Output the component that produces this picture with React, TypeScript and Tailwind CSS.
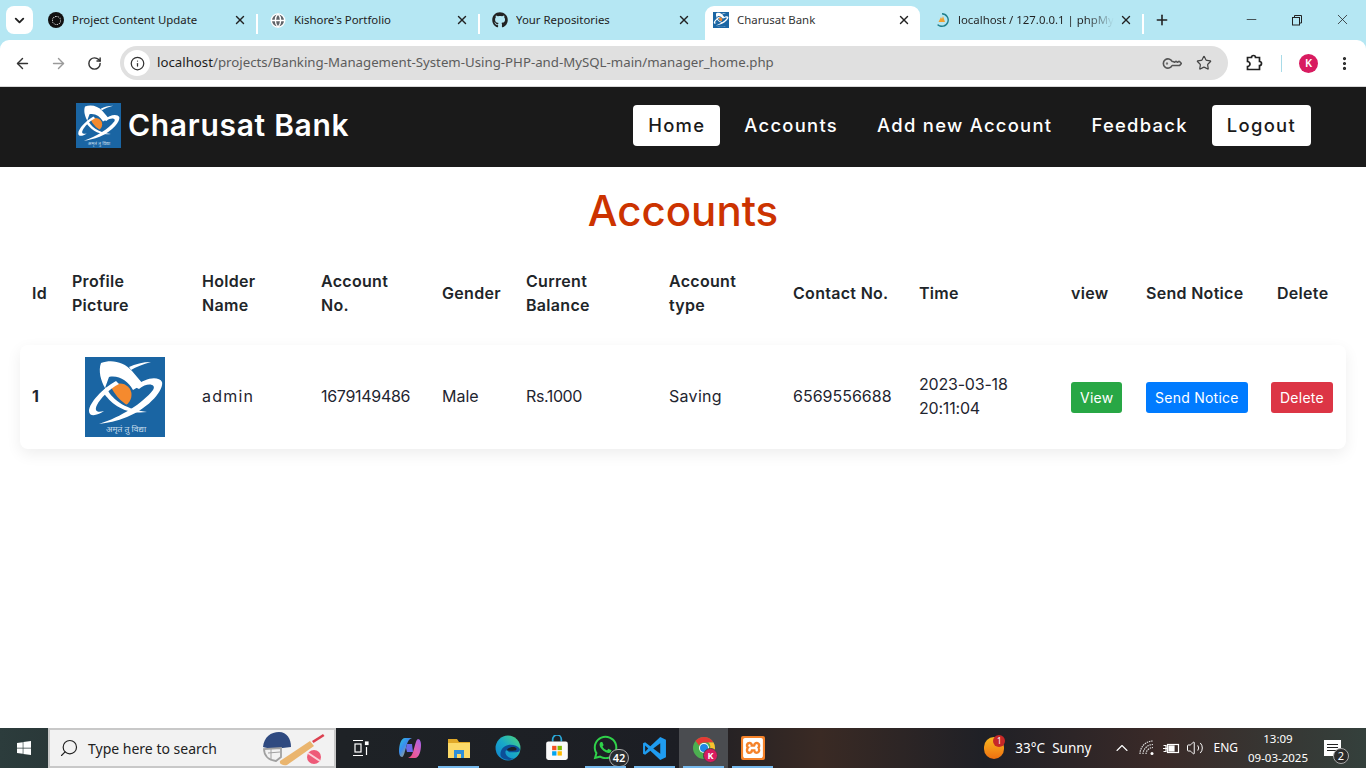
import { ArrowLeft, ArrowRight, ChevronDown, ChevronUp, Globe, Info, KeyRound, Minus, MoreVertical, Plus, RotateCw, Search, Star, Volume2, X } from 'lucide-react';
import { FaGithub, FaWhatsapp, FaWindows } from 'react-icons/fa';
import { SiXampp } from 'react-icons/si';

const poppins = { fontFamily: 'Inter, "Liberation Sans", sans-serif' };

function BankLogo({ className }: { className: string }) {
  return (
    <svg viewBox="0 0 80 80" className={className}>
      <rect width="80" height="80" fill="#1a65a3" />
      <circle cx="35" cy="38" r="11.500" fill="#f58a2e" />
      <path d="M20 27C25 41 36 53 54 58" fill="none" stroke="#1a65a3" strokeWidth="9" />
      <path d="M16 6C27 2 39 5 47 14L58 27 48 33C43 24 34 18 24 20L20 31C16 24 13 14 16 6Z" fill="#fff" />
      <path d="M21 30C26 41 38 52 62 55 40 58 26 47 18 35Z" fill="#fff" />
      <path d="M31 24C18 31 4 46 4 54 4 60 12 59 19 54 12 56 9 54 12 48 15 42 24 32 34 27Z" fill="#fff" />
      <path d="M44 10C50 7 58 5 66 5 58 7 51 10 46 13Z" fill="#fff" />
      <path d="M50 30C60 20 74 19 77 25 79 32 66 50 42 60 32 64 22 66 14 67 36 60 58 46 68 33 72 27 62 25 54 32Z" fill="#fff" />
      <text x="41" y="75" textAnchor="middle" fontSize="8.500" fill="#c7dcec" fontFamily="'Noto Sans', sans-serif">अमृतं तु विद्या</text>
    </svg>
  );
}

function ChromeTab({ icon, title, active, fade, divider }: { icon: React.ReactNode; title: string; active?: boolean; fade?: boolean; divider?: boolean }) {
  return (
    <div className={active ? 'relative mr-[2px] ml-[3px] flex h-[34px] w-[215px] items-center rounded-t-[9px] bg-white pr-[9px] pb-[6px] pl-[8px]' : 'relative flex h-[34px] w-[222px] items-center pr-[11px] pb-[6px] pl-[12px]'}>
      <span className="flex h-4 w-4 shrink-0 items-center justify-center">{icon}</span>
      <span className={`ml-2 flex-1 overflow-hidden whitespace-nowrap text-[11.400px] ${active ? 'text-[#333]' : 'text-[#222]'}`}>
        {fade ? <span className="bg-gradient-to-r from-[#222] from-[82%] to-transparent bg-clip-text text-transparent">{title}</span> : title}
      </span>
      <X size={14} strokeWidth={2.400} className="shrink-0 text-[#222]" />
      {divider && <span className="absolute top-[8px] right-0 h-[20px] w-[2px] bg-white" />}
    </div>
  );
}

function PmaIcon() {
  return (
    <svg viewBox="0 0 16 16" className="h-4 w-4">
      <path d="M8 1a7 7 0 1 1-5 12l1.200-.8A5.600 5.600 0 1 0 8 2.400Z" fill="#1f7f8c" />
      <path d="M4.500 10 7 5l1 2 1-3 2 6Z" fill="#f0a030" />
    </svg>
  );
}

function ChromeBar() {
  return (
    <div className="bg-[#b5e7f3]">
      <div className="flex h-[40px] items-end">
        <div className="mb-[6px] ml-[6px] flex h-[28px] w-[27px] items-center justify-center rounded-[8px] bg-white">
          <ChevronDown size={15} strokeWidth={3} className="text-[#222]" />
        </div>
        <div className="ml-[3px] flex" style={{ fontFamily: '"Noto Sans", sans-serif' }}>
          <ChromeTab divider title="Project Content Update" icon={<span className="flex h-4 w-4 items-center justify-center rounded-full bg-[#111]"><span className="h-[9px] w-[9px] rounded-full border border-dotted border-white" /></span>} />
          <ChromeTab divider title="Kishore's Portfolio" icon={<Globe size={17} className="fill-[#5f6368] text-white" />} />
          <ChromeTab title="Your Repositories" icon={<FaGithub size={16} className="text-[#222]" />} />
          <ChromeTab active title="Charusat Bank" icon={<BankLogo className="h-4 w-4" />} />
          <ChromeTab divider fade title="localhost / 127.0.0.1 | phpMy" icon={<PmaIcon />} />
        </div>
        <div className="mb-[12px] ml-[10px] flex flex-1 items-center">
          <Plus size={16} strokeWidth={2.400} className="text-[#222]" />
          <Minus size={15} strokeWidth={1.200} className="ml-[74px] text-[#222]" />
          <svg viewBox="0 0 12 12" className="ml-[32px] h-3 w-3 fill-none stroke-[#222]">
            <rect x="1.500" y="3.500" width="7" height="7.500" />
            <path d="M3.500 3.500V1.500h7v7.500H8.500" />
          </svg>
          <X size={17} strokeWidth={1.100} className="ml-[31px] text-[#222]" />
        </div>
      </div>
      <div className="flex h-[46px] items-center rounded-t-[9px] bg-white">
        <ArrowLeft size={17} strokeWidth={2} className="ml-[14px] text-[#333]" />
        <ArrowRight size={17} strokeWidth={2} className="ml-[19px] text-[#9a9a9a]" />
        <RotateCw size={15} strokeWidth={2.300} className="ml-[20px] text-[#333]" />
        <div className="ml-[18px] flex h-[34px] w-[1108px] items-center rounded-full bg-[#e0e0e0] pr-[16px] pl-[4px]">
          <span className="flex h-[26px] w-[26px] items-center justify-center rounded-full bg-white">
            <Info size={15} strokeWidth={2} className="text-[#333]" />
          </span>
          <span className="ml-[7px] flex-1 text-[13.250px] text-[#5c5c5c]" style={{ fontFamily: '"Noto Sans", sans-serif' }}>
            <span className="text-[#1d1d1d]">localhost</span>/projects/Banking-Management-System-Using-PHP-and-MySQL-main/manager_home.php
          </span>
          <KeyRound size={17} strokeWidth={2.300} className="-rotate-[135deg] text-[#555]" />
          <Star size={16} strokeWidth={1.800} className="ml-[16px] text-[#444]" />
        </div>
        <svg viewBox="0 0 18 18" className="ml-[17px] h-[18px] w-[18px] fill-none stroke-[#222] stroke-[1.700]">
          <path d="M2.500 3.500h4a2 2 0 0 1 4 0h4v4a2 2 0 0 1 0 4v4h-12v-3a2.500 2.500 0 0 0 0-5Z" />
        </svg>
        <span className="ml-[18px] h-[17px] w-px bg-[#a8dbe8]" />
        <span className="ml-[17px] flex h-[19px] w-[19px] items-center justify-center rounded-full bg-[#d81b60] text-[11px] font-semibold text-white" style={{ fontFamily: '"Noto Sans", sans-serif' }}>K</span>
        <MoreVertical size={17} strokeWidth={2.500} className="ml-[18px] text-[#222]" />
      </div>
      <div className="h-px bg-[#d8d8d8]" />
    </div>
  );
}

function Navbar() {
  const links = ['Home', 'Accounts', 'Add new Account', 'Feedback', 'Logout'];
  return (
    <nav className="flex h-[80px] items-center bg-[#1a1a1a] pr-[55px] pb-[3px] pl-[76px]" style={poppins}>
      <BankLogo className="h-[45px] w-[45px]" />
      <span className="ml-[7px] flex-1 text-[30px] font-semibold tracking-[0.700px] text-white">Charusat Bank</span>
      <div className="flex items-center gap-[9px]">
        {links.map((l) => {
          const solid = l === 'Home' || l === 'Logout';
          return (
            <a key={l} className={`flex h-[41px] items-center rounded-[4px] px-[15px] text-[18.400px] font-medium tracking-[1.300px] ${solid ? 'bg-white text-[#1a1a1a]' : 'text-white'}`}>{l}</a>
          );
        })}
      </div>
    </nav>
  );
}

function ActionButton({ label, color }: { label: string; color: string }) {
  return <button className={`h-[31px] rounded-[3px] px-[9px] text-[14px] tracking-[0.250px] whitespace-nowrap text-white ${color}`}>{label}</button>;
}

function AccountsTable() {
  const headers: [string, string][] = [
    ['Id', 'w-[40px]'],
    ['Profile|Picture', 'w-[130px]'],
    ['Holder|Name', 'w-[119px]'],
    ['Account|No.', 'w-[121px]'],
    ['Gender', 'w-[84px]'],
    ['Current|Balance', 'w-[143px]'],
    ['Account|type', 'w-[124px]'],
    ['Contact No.', 'w-[126px]'],
    ['Time', 'w-[152px]'],
    ['view', 'w-[75px]'],
    ['Send Notice', 'w-[125px]'],
    ['Delete', 'w-[87px]'],
  ];
  return (
    <table className="mx-[20px] w-[1326px] table-fixed border-separate border-spacing-y-[16px] text-[16px] text-[#1f2530]">
      <thead>
        <tr className="h-[72px]">
          {headers.map(([h, w]) => (
            <th key={h} className={`${w} px-[12px] text-left font-semibold leading-[24px] tracking-[0.300px] text-[#212529] ${h === 'Delete' ? 'pl-[18px]' : ''}`}>
              {h.split('|').map((part) => (
                <div key={part}>{part}</div>
              ))}
            </th>
          ))}
        </tr>
      </thead>
      <tbody>
        <tr className="h-[104px] rounded-[8px] shadow-[0_5px_15px_rgba(0,0,0,0.07)]">
          <td className="rounded-l-[8px] px-[12px] pb-[2px] font-bold">1</td>
          <td className="px-[12px]"><BankLogo className="mx-auto h-[80px] w-[80px]" /></td>
          <td className="px-[12px] pb-[2px] tracking-[1.200px]">admin</td>
          <td className="px-[12px] pb-[2px] tracking-[-0.300px]">1679149486</td>
          <td className="px-[12px] pb-[2px]">Male</td>
          <td className="px-[12px] pb-[2px] tracking-[-0.400px]">Rs.1000</td>
          <td className="px-[12px] pb-[2px] tracking-[0.300px]">Saving</td>
          <td className="px-[12px] pb-[2px]">6569556688</td>
          <td className="px-[12px] pb-[2px] leading-[24px] tracking-[-0.200px]">2023-03-18 20:11:04</td>
          <td className="px-[12px]"><ActionButton label="View" color="bg-[#28a745]" /></td>
          <td className="px-[12px]"><ActionButton label="Send Notice" color="bg-[#007bff]" /></td>
          <td className="rounded-r-[8px] px-[12px]"><ActionButton label="Delete" color="bg-[#dc3545]" /></td>
        </tr>
      </tbody>
    </table>
  );
}

function TaskItem({ children, active, running }: { children: React.ReactNode; active?: boolean; running?: boolean }) {
  return (
    <div className={`relative flex h-[40px] w-[49px] items-center justify-center ${active ? 'bg-[#4a4c50]' : ''}`}>
      {children}
      {running && <span className="absolute right-[4px] bottom-0 left-[4px] h-[2px] bg-[#76b9ed]" />}
    </div>
  );
}

function Taskbar() {
  return (
    <div className="flex h-[40px] items-center bg-[linear-gradient(90deg,#2c3c3c_0%,#1e2226_25%,#1c1e24_50%,#3a2a24_60%,#1f2026_72%,#3a2a28_85%,#34403c_100%)] text-white" style={{ fontFamily: '"Noto Sans", sans-serif' }}>
      <div className="flex h-[40px] w-[48px] items-center justify-center">
        <FaWindows size={16} />
      </div>
      <div className="flex h-[40px] w-[288px] items-center border-2 border-[#c8c8c8] bg-[#f2f2f2] pl-[9px] text-[#222]">
        <Search size={20} strokeWidth={1.400} className="-scale-x-100" />
        <span className="ml-[9px] flex-1 text-[14px]">Type here to search</span>
        <svg viewBox="0 2 80 36" className="h-[36px] w-[80px]">
          <path d="M9 19C10 9 17 4 25 4c8 0 12 7 12 15L20 21C15 20 11 20 9 19Z" fill="#2f4a80" />
          <path d="M10 21c0 6 4 11 12 12l5-4V20Z" fill="none" stroke="#a0a0a0" strokeWidth="1.800" />
          <path d="M14 25l12-1M17 20v11" stroke="#a0a0a0" />
          <path d="M26 33 56 13l4 5-27 19c-4 1-8-1-7-4Z" fill="#eab56e" />
          <path d="M58 13l11-7 1.500 2-11 7Z" fill="#dc4050" />
          <circle cx="60" cy="29" r="7" fill="#ee5a78" />
          <path d="M54 25l12 8" stroke="#fbd0d8" strokeWidth="2" />
        </svg>
      </div>
      <TaskItem>
        <svg viewBox="0 0 18 18" className="h-[18px] w-[18px] fill-none stroke-white stroke-[1.200]">
          <path d="M1 1.500h10M1 16.500h10" />
          <rect x="3" y="5" width="6" height="8" />
          <rect x="13.500" y="3" width="2.500" height="2.500" fill="#fff" />
          <path d="M14.500 8v8" />
        </svg>
      </TaskItem>
      <TaskItem>
        <svg viewBox="0 0 24 24" className="h-[24px] w-[24px]">
          <defs>
            <linearGradient id="cpA" x1="0" y1="0" x2="1" y2="1"><stop offset="0" stopColor="#2cc5d8" /><stop offset="0.400" stopColor="#3a8cf0" /><stop offset="1" stopColor="#f0b030" /></linearGradient>
            <linearGradient id="cpB" x1="0" y1="1" x2="1" y2="0"><stop offset="0" stopColor="#f04878" /><stop offset="0.500" stopColor="#e060b0" /><stop offset="1" stopColor="#a060f0" /></linearGradient>
          </defs>
          <path d="M7 2h7c-3 1-4 3-5 6L7 15c-1 4-2 6-3 6-2 0-3-3-3-6 0-6 2-13 6-13Z" fill="url(#cpA)" />
          <path d="M17 22h-7c3-1 4-3 5-6l2-7c1-4 2-6 3-6 2 0 3 3 3 6 0 6-2 13-6 13Z" fill="url(#cpB)" />
          <path d="M9 8h5l1 8H9l-1-4Z" fill="#6a6ae8" />
        </svg>
      </TaskItem>
      <TaskItem running>
        <svg viewBox="0 0 24 24" className="h-[24px] w-[24px]">
          <path d="M1 3h9l2 3h11v15H1Z" fill="#e0a828" />
          <path d="M1 7h22v15H1Z" fill="#fbd968" />
          <path d="M7 14h10v8h-3v-4h-4v4H7Z" fill="#2f8fd8" />
        </svg>
      </TaskItem>
      <TaskItem>
        <svg viewBox="0 0 24 24" className="h-[26px] w-[26px]">
          <defs>
            <linearGradient id="edgeA" x1="0" y1="1" x2="1" y2="0"><stop offset="0" stopColor="#1080d0" /><stop offset="0.500" stopColor="#18a8c8" /><stop offset="1" stopColor="#50d878" /></linearGradient>
          </defs>
          <circle cx="12" cy="12" r="11.500" fill="url(#edgeA)" />
          <path d="M5 18c0-6 5-9 9-9 4 0 7 1 9 4 0 3-2 3-5 3h-4c-2 0-2-2-3-2-2 0-2 4 1 6 2 1.500 4 2 6 1.500-2 1-3 1.500-5 1.500-4 0-8-2-8-5Z" fill="#0c4f98" />
          <path d="M11 14c1-3 8-4 9-1 0 2-4 1.500-6 1.500Z" fill="#1c2026" />
        </svg>
      </TaskItem>
      <TaskItem>
        <svg viewBox="0 0 24 24" className="h-[26px] w-[26px]">
          <path d="M8 6V4a4 4 0 0 1 8 0v2" fill="none" stroke="#2aa8d8" strokeWidth="1.600" />
          <rect x="2" y="6" width="20" height="17" rx="2" fill="#fafafa" />
          <rect x="7.500" y="10" width="4" height="4" fill="#f25022" />
          <rect x="12.500" y="10" width="4" height="4" fill="#7fba00" />
          <rect x="7.500" y="15" width="4" height="4" fill="#00a4ef" />
          <rect x="12.500" y="15" width="4" height="4" fill="#ffb900" />
        </svg>
      </TaskItem>
      <TaskItem running>
        <FaWhatsapp size={27} className="-translate-y-[1px] text-[#2fd14a]" />
        <span className="absolute right-[1px] bottom-[1px] flex h-[18px] w-[20px] items-center justify-center rounded-full border border-[#aaa] bg-[#2a2d30] text-[11px] font-semibold">42</span>
      </TaskItem>
      <TaskItem running>
        <svg viewBox="0 0 24 24" className="h-[25px] w-[25px]">
          <path d="M17.500 1 23 3.600v16.800L17.500 23 8 14.200 3 18l-2-1V7l2-1 5 3.800Z" fill="#1f9cf0" />
          <path d="M17.500 7 10.800 12l6.700 5Z" fill="#1c2026" />
          <path d="M3 9v6l3-3Z" fill="#1c2026" />
        </svg>
      </TaskItem>
      <TaskItem active running>
        <svg viewBox="0 0 24 24" className="h-[24px] w-[24px]">
          <circle cx="12" cy="12" r="11" fill="#4caf50" />
          <path d="M12 1a11 11 0 0 1 9.500 5.500H12a5.500 5.500 0 0 0-5 3L3.500 4.800A11 11 0 0 1 12 1Z" fill="#e53935" />
          <path d="M21.500 6.500A11 11 0 0 1 12 23l4.700-8.200a5.500 5.500 0 0 0-.4-8.300Z" fill="#fbc02d" />
          <circle cx="12" cy="12" r="5" fill="#fff" />
          <circle cx="12" cy="12" r="4" fill="#1e88e5" />
        </svg>
        <span className="absolute right-[10px] bottom-[5px] flex h-[15px] w-[15px] items-center justify-center rounded-full border border-[#444] bg-[#d81b60] text-[9px] font-bold">K</span>
      </TaskItem>
      <TaskItem running>
        <span className="flex h-[24px] w-[24px] items-center justify-center rounded-[2px] bg-[#f5822a]">
          <SiXampp size={20} className="text-white" />
        </span>
      </TaskItem>
      <div className="flex flex-1 items-center justify-end text-[13.500px]">
        <span className="relative mr-[11px] h-[22px] w-[20px] rounded-full bg-gradient-to-b from-[#f8b820] to-[#ee6f10]">
          <span className="absolute -top-[2px] -right-[1px] flex h-[12px] w-[12px] items-center justify-center rounded-full bg-[#c62828] text-[8px]">1</span>
        </span>
        <span className="whitespace-nowrap">33°C&nbsp; Sunny</span>
        <ChevronUp size={20} strokeWidth={1.300} className="ml-[21px]" />
        <svg viewBox="0 0 16 16" className="ml-[7px] h-[16px] w-[16px] fill-none stroke-[#ddd]">
          <path d="M1 14a13 13 0 0 1 13-13" strokeWidth="1.200" strokeDasharray="1.500 0.800" />
          <path d="M4 14A10 10 0 0 1 14 4.500" strokeWidth="1.200" strokeDasharray="1.500 0.800" />
          <path d="M7 14a7 7 0 0 1 7-6.500" strokeWidth="1.200" strokeDasharray="1.500 0.800" />
          <circle cx="13" cy="13.500" r="1.500" fill="#fff" stroke="none" />
        </svg>
        <svg viewBox="0 0 18 18" className="ml-[7px] h-[18px] w-[18px] fill-none stroke-white stroke-[1.200]">
          <rect x="5.500" y="5.500" width="11" height="8" />
          <rect x="7" y="7" width="5" height="5" fill="#fff" />
          <path d="M1 9.500h4M1.500 6.500h2.500v6H1.500" />
        </svg>
        <Volume2 size={18} strokeWidth={1.300} className="ml-[6px]" />
        <span className="ml-[9px] text-[12px]">ENG</span>
        <div className="ml-[10px] flex w-[60px] flex-col items-center text-[11.500px] leading-[19px]">
          <span>13:09</span>
          <span className="whitespace-nowrap">09-03-2025</span>
        </div>
        <div className="relative mr-[25px] ml-[16px] h-[16px] w-[17px] bg-white">
          <span className="absolute top-[4px] left-[3px] h-px w-[11px] bg-[#222]" />
          <span className="absolute top-[7px] left-[3px] h-px w-[11px] bg-[#222]" />
          <span className="absolute top-[10px] left-[3px] h-px w-[11px] bg-[#222]" />
          <span className="absolute -right-[8px] -bottom-[8px] flex h-[16px] w-[16px] items-center justify-center rounded-full border border-[#aaa] bg-[#2a2a2a] text-[11px]">2</span>
        </div>
      </div>
    </div>
  );
}

export default function App() {
  return (
    <div className="flex h-[768px] flex-col overflow-hidden bg-white">
      <ChromeBar />
      <Navbar />
      <main className="flex-1" style={poppins}>
        <h1 className="mt-[14px] text-center text-[42px] leading-[60px] font-medium text-[#cc3300]">Accounts</h1>
        <AccountsTable />
      </main>
      <Taskbar />
    </div>
  );
}
